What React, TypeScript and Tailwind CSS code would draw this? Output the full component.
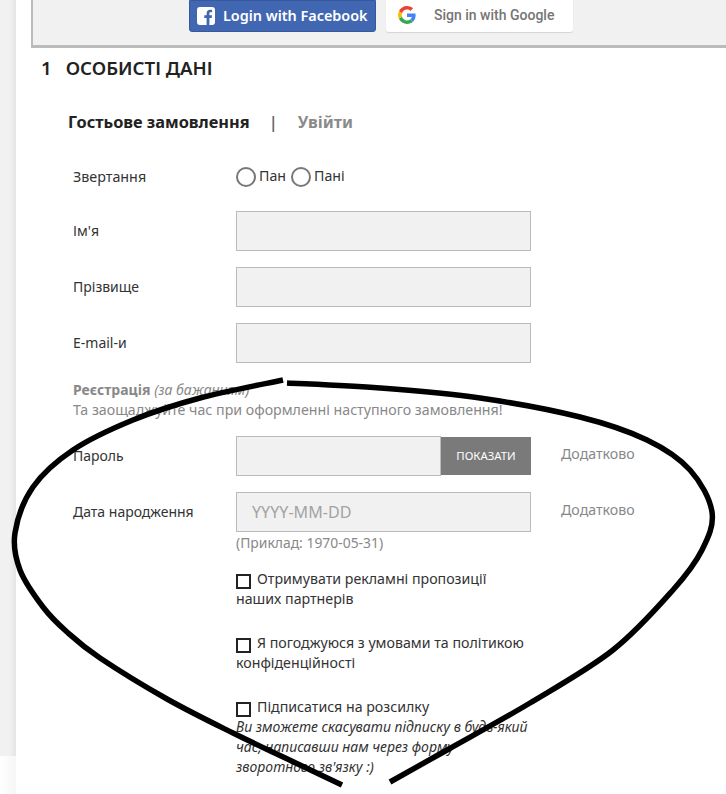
import React from 'react'

const sans = "font-['Noto_Sans','Open_Sans',sans-serif]"

// the hand-drawn marker loop over the form
const leftStroke: [number, number][] = [
  [283, 380], [200, 398], [133, 420], [73, 450], [33, 487], [15, 533], [20, 570], [43, 607], [67, 632], [100, 658],
  [167, 699], [233, 733], [300, 765], [342, 785],
]
const rightStroke: [number, number][] = [
  [287, 383], [380, 388], [480, 398], [580, 417], [647, 440], [690, 470], [712, 512], [702, 550], [673, 590],
  [613, 650], [530, 703], [447, 750], [390, 782],
]

function smoothPath(pts: [number, number][]) {
  let d = `M${pts[0][0]} ${pts[0][1]}`
  for (let i = 0; i < pts.length - 1; i++) {
    const p0 = pts[Math.max(i - 1, 0)]
    const p1 = pts[i]
    const p2 = pts[i + 1]
    const p3 = pts[Math.min(i + 2, pts.length - 1)]
    d += ` C${p1[0] + (p2[0] - p0[0]) / 6} ${p1[1] + (p2[1] - p0[1]) / 6} ${p2[0] - (p3[0] - p1[0]) / 6} ${p2[1] - (p3[1] - p1[1]) / 6} ${p2[0]} ${p2[1]}`
  }
  return d
}

function FieldRow({ label, children, extra }: { label: string; children?: React.ReactNode; extra?: boolean }) {
  return (
    <div className="flex items-center h-10">
      <div className="w-[163px] -mt-[2px] text-[14px] text-[#333]">{label}</div>
      {children ?? <div className="w-[295px] h-10 bg-[#f1f1f1] border border-[#bbb]" />}
      {extra && <div className="ml-[30px] -mt-[4px] text-[14.2px] text-[#888]">Додатково</div>}
    </div>
  )
}

function Check({ children }: { children: React.ReactNode }) {
  return (
    <div className="text-[14.2px] leading-[20px] text-[#333]">
      <span className="inline-block w-[15px] h-[15px] border-2 border-[#222] align-[-5px] mr-[6px]" />
      {children}
    </div>
  )
}

export default function App() {
  return (
    <div className={`relative w-[726px] h-[794px] overflow-hidden bg-white ${sans}`}>
      <div className="flex">
        <div className="w-[16px] flex flex-col">
          <div className="h-[756px] bg-gradient-to-r from-[#f1f1f1] from-60% to-[#e4e4e4]" />
          <div className="h-[38px] bg-gradient-to-r from-white to-[#f6f6f6]" />
        </div>
        <div className="flex-1 pl-[15px]">
          {/* social login box */}
          <div className="h-[48px] bg-[#f1f1f1] border-l-2 border-b-[3px] border-[#bbb] flex gap-[10px] pl-[156px] items-start">
            <div className="w-[187px] h-[32px] bg-[#4267b2] border border-[#37589b] rounded-b-[3px] flex items-center pl-[7px] gap-[8px] pb-[1px] text-white font-semibold text-[14.4px]">
              <svg width="18" height="18" viewBox="0 0 18 18">
                <rect width="18" height="18" rx="3" fill="#fff" />
                <path d="M12.4 18v-7h2.3l.4-2.7h-2.7V6.600c0-.8.2-1.300 1.300-1.300h1.400V2.900c-.3 0-1.100-.1-2-.1-2.100 0-3.500 1.300-3.500 3.600v1.900H7.300V11h2.300v7z" fill="#4267b2" />
              </svg>
              Login with Facebook
            </div>
            <div className="w-[187px] h-[32px] bg-white rounded-b-[3px] shadow-[0_1px_1px_rgba(0,0,0,0.12)] flex items-center pl-[12px] gap-[18px] pb-[2px] font-['Roboto',sans-serif] font-medium text-[14px] text-[#757575]">
              <svg width="18" height="18" viewBox="0 0 48 48">
                <path fill="#EA4335" d="M24 9.500c3.500 0 6.700 1.200 9.200 3.600l6.900-6.900C35.900 2.400 30.500 0 24 0 14.600 0 6.500 5.400 2.600 13.200l8 6.200C12.500 13.600 17.800 9.500 24 9.500z" />
                <path fill="#4285F4" d="M47 24.500c0-1.600-.1-3.100-.4-4.500H24v9h12.900c-.6 3-2.200 5.500-4.700 7.200l7.700 6C44.400 37.900 47 31.800 47 24.500z" />
                <path fill="#FBBC05" d="M10.600 28.600c-.5-1.400-.8-3-.8-4.600s.3-3.200.8-4.600l-8-6.200C.9 16.500 0 20.100 0 24s.9 7.500 2.600 10.800l8-6.200z" />
                <path fill="#34A853" d="M24 48c6.500 0 11.900-2.100 15.900-5.800l-7.700-6c-2.200 1.500-4.900 2.300-8.200 2.300-6.200 0-11.500-4.200-13.400-9.800l-8 6.200C6.500 42.600 14.600 48 24 48z" />
              </svg>
              Sign in with Google
            </div>
          </div>

          <div className="mt-[8px] pl-[10px] flex gap-[14px] text-[18.700px] leading-[24px] font-semibold text-[#222]">
            <span>1</span>
            <span>ОСОБИСТІ ДАНІ</span>
          </div>

          <div className="mt-[30px] pl-[37px] flex text-[16.350px] leading-[24px] font-bold">
            <span className="text-[#222]">Гостьове замовлення</span>
            <span className="ml-[19px] text-[#666] font-semibold">|</span>
            <span className="ml-[20px] text-[#8a8a8a]">Увійти</span>
          </div>

          <div className="pl-[42px]">
            <div className="mt-[31px] flex items-center h-[24px]">
              <div className="w-[163px] text-[14.3px] text-[#333]">Звертання</div>
              <div className="flex items-center text-[14.2px] text-[#333] -mt-[2px]">
                <span className="w-[20px] h-[20px] rounded-full border-2 border-[#777] mr-[3px] mt-[2px]" />
                <span>Пан</span>
                <span className="w-[20px] h-[20px] rounded-full border-2 border-[#777] ml-[5px] mr-[3px] mt-[2px]" />
                <span>Пані</span>
              </div>
            </div>

            <div className="mt-[22px] flex flex-col gap-[16px]">
              <FieldRow label="Ім'я" />
              <FieldRow label="Прізвище" />
              <FieldRow label="E-mail-и" />
            </div>

            <div className="mt-[17px] text-[14px] leading-[20px] text-[#888]">
              <div>
                <span className="font-bold">Реєстрація</span> <i>(за бажанням)</i>
              </div>
              <div className="text-[14.2px]">Та заощаджуйте час при оформленні наступного замовлення!</div>
            </div>

            <div className="mt-[16px] flex flex-col gap-[16px]">
              <FieldRow label="Пароль" extra>
                <div className="w-[295px] h-10 flex">
                  <div className="flex-1 bg-[#f1f1f1] border border-[#bbb]" />
                  <div className="w-[90px] my-[1px] bg-[#7a7a7a] text-white text-[11.4px] flex items-center justify-center">ПОКАЗАТИ</div>
                </div>
              </FieldRow>
              <FieldRow label="Дата народження" extra>
                <div className="w-[295px] h-10 bg-[#f1f1f1] border border-[#bbb] pl-[15px] flex items-center text-[16.100px] text-[#a3a3a3]">YYYY-MM-DD</div>
              </FieldRow>
            </div>

            <div className="ml-[163px] w-[295px]">
              <div className="mt-[1px] text-[13.9px] leading-[20px] text-[#888]">(Приклад: 1970-05-31)</div>
              <div className="mt-[16px] flex flex-col gap-[24px]">
                <Check>Отримувати рекламні пропозиції наших партнерів</Check>
                <Check>Я погоджуюся з умовами та політикою конфіденційності</Check>
                <div>
                  <Check>Підписатися на розсилку</Check>
                  <div className="w-[295px] text-[14px] leading-[20px] italic text-[#333]">
                    Ви зможете скасувати підписку в будь-який час, написавши нам через форму
                    <br />
                    зворотного зв'язку :)
                  </div>
                </div>
              </div>
            </div>
          </div>
        </div>
      </div>

      <svg className="absolute inset-0 pointer-events-none" width="726" height="794" fill="none" stroke="#000" strokeWidth="5.500">
        <path d={smoothPath(leftStroke)} />
        <path d={smoothPath(rightStroke)} />
      </svg>
    </div>
  )
}
